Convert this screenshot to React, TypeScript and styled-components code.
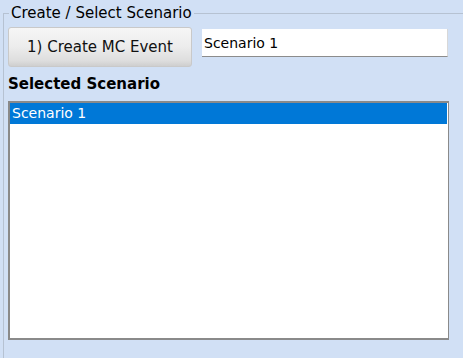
import styled, { createGlobalStyle } from "styled-components";

const GlobalStyle = createGlobalStyle`
  html, body {
    margin: 0;
    padding: 0;
    background: #d1e0f5;
  }
  body {
    font-family: "DejaVu Sans", sans-serif;
  }
`;

const scenarios = ["Scenario 1"];

export default function App() {
  return (
    <>
      <GlobalStyle />
      <Page>
        <Group>
          <Legend>Create / Select Scenario</Legend>
          <Row>
            <CreateButton>1) Create MC Event</CreateButton>
            <NameInput defaultValue="Scenario 1" />
          </Row>
          <Heading>Selected Scenario</Heading>
          <ListBox>
            {scenarios.map((s, i) => (
              <ListItem key={s} $selected={i === 0}>
                {s}
              </ListItem>
            ))}
          </ListBox>
        </Group>
      </Page>
    </>
  );
}

const Page = styled.div`
  width: 463px;
  height: 358px;
  padding: 4px 0 0 3px;
  box-sizing: border-box;
  display: flex;
  flex-direction: column;
`;

const Group = styled.fieldset`
  flex: 1;
  margin: 0;
  padding: 0 0 0 4px;
  min-width: 0;
  min-height: 0;
  border: none;
  border-top: 1px solid #b6c2d2;
  border-left: 1px solid #b6c2d2;
  font-family: "DejaVu Sans", sans-serif;
`;

const Legend = styled.legend`
  margin-left: 1px;
  padding: 0 2px;
  font-size: 15px;
  line-height: 18px;
  color: #000;
`;

const Row = styled.div`
  display: flex;
  align-items: flex-start;
  gap: 10px;
  margin-top: 5px;
`;

const CreateButton = styled.button`
  width: 184px;
  height: 40px;
  border: 1px solid #c9c9c9;
  border-radius: 3px;
  background: linear-gradient(#f6f6f6 0%, #ececec 50%, #dedede 85%, #cfcfcf 100%);
  font-family: "DejaVu Sans", sans-serif;
  font-size: 15px;
  color: #111;
  padding: 0;
`;

const NameInput = styled.input`
  margin-top: 2px;
  width: 246px;
  height: 28px;
  box-sizing: border-box;
  border: none;
  border-right: 1px solid #d8d8d8;
  border-bottom: 1px solid #8c8c8c;
  background: #fff;
  padding: 0 0 0 2px;
  font-family: "DejaVu Sans", sans-serif;
  font-size: 14px;
  color: #000;
  outline: none;
`;

const Heading = styled.div`
  margin-top: 8px;
  font-weight: bold;
  font-size: 15px;
  line-height: 19px;
  height: 19px;
`;

const ListBox = styled.div`
  margin-top: 7px;
  width: 441px;
  height: 239px;
  box-sizing: border-box;
  background: #fff;
  border: 2px solid #8a8a8a;
  border-right-width: 1px;
  padding: 0 1px 0 0;
`;

const ListItem = styled.div<{ $selected?: boolean }>`
  height: 21px;
  line-height: 21px;
  padding-left: 2px;
  font-size: 14px;
  color: ${(p) => (p.$selected ? "#fff" : "#000")};
  background: ${(p) => (p.$selected ? "#0078d7" : "transparent")};
`;
